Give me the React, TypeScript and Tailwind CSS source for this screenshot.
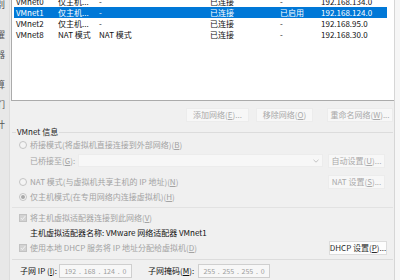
import React from "react";

type Row = {
  name: string;
  type: string;
  host: string;
  status: string;
  dhcp: string;
  subnet: string;
  selected?: boolean;
};

const ROWS: Row[] = [
  { name: "VMnet0", type: "仅主机...", host: "-", status: "已连接", dhcp: "-", subnet: "192.168.134.0" },
  { name: "VMnet1", type: "仅主机...", host: "-", status: "已连接", dhcp: "已启用", subnet: "192.168.124.0", selected: true },
  { name: "VMnet2", type: "仅主机...", host: "-", status: "已连接", dhcp: "-", subnet: "192.168.95.0" },
  { name: "VMnet8", type: "NAT 模式", host: "NAT 模式", status: "已连接", dhcp: "-", subnet: "192.168.30.0" },
];

// clipped glyphs of the window behind, only their right halves show
const BEHIND = ["别", "", "", "曜", "", "器", "", "", "算", "", "们", "", "计"];

function U({ c }: { c: string }) {
  return <span className="underline">{c}</span>;
}

function Btn({
  children,
  className,
  enabled,
}: {
  children: React.ReactNode;
  className: string;
  enabled?: boolean;
}) {
  return (
    <div
      className={`flex h-[14px] items-center justify-center whitespace-nowrap border ${
        enabled
          ? "border-[#dcdcdc] bg-[#fdfdfd] text-[#2a2a2a]"
          : "border-[#ececec] bg-[#f7f7f7] text-[#a9a9a9]"
      } ${className}`}
    >
      {children}
    </div>
  );
}

function Radio({ checked }: { checked?: boolean }) {
  return (
    <div className="flex h-[8px] w-[8px] items-center justify-center rounded-full border border-[#c4c4c4] bg-[#f4f4f4]">
      {checked ? <div className="h-[4px] w-[4px] rounded-full bg-[#a8a8a8]" /> : null}
    </div>
  );
}

function Check() {
  return (
    <div className="flex h-[8px] w-[8px] items-center justify-center border border-[#c2c2c2] bg-[#d3d3d3]">
      <svg width="6" height="6" viewBox="0 0 6 6">
        <path d="M0.8 3 L2.4 4.6 L5.2 1.2" fill="none" stroke="#f3f3f3" strokeWidth="1" />
      </svg>
    </div>
  );
}

function IpBox({ parts, className }: { parts: string[]; className: string }) {
  return (
    <div
      className={`flex h-[14px] items-center justify-around border border-[#cfcfcf] bg-[#f7f7f7] px-[3px] text-[7px] text-[#9c9c9c] ${className}`}
    >
      {parts.map((p, i) => (
        <React.Fragment key={i}>
          {i > 0 ? <span>.</span> : null}
          <span>{p}</span>
        </React.Fragment>
      ))}
    </div>
  );
}

export default function App() {
  return (
    <div className="flex h-[280px] w-[400px] overflow-hidden bg-[#f0f0f0] font-['Noto_Sans_CJK_SC','Liberation_Sans',sans-serif] text-[8px] leading-[10px] text-[#1a1a1a]">
      {/* window behind */}
      <div className="flex w-[10px] flex-col overflow-hidden border-r border-[#dddddd] bg-[#e8e8e8] text-[9px] leading-[10px] text-[#555]">
        {BEHIND.map((c, i) => (
          <div key={i} className="-ml-[4px] h-[10px] shrink-0">
            {c}
          </div>
        ))}
      </div>

      {/* dialog */}
      <div className="flex w-[385px] flex-col border-r border-[#d6d6d6] pl-[1px]">
        {/* network list */}
        <div className="h-[101px] overflow-hidden border-b border-l border-[#ababab] bg-white">
          <div className="-mt-[4px] pl-[2px]">
            {ROWS.map((r) => (
              <div
                key={r.name}
                className={`flex h-[11px] w-[373px] items-center whitespace-nowrap pl-[2px] ${
                  r.selected ? "bg-[#0078d7] text-white" : "text-[#111]"
                }`}
              >
                <div className="w-[42px]">{r.name}</div>
                <div className="w-[41px]">{r.type}</div>
                <div className="w-[111px]">{r.host}</div>
                <div className="w-[70px]">{r.status}</div>
                <div className="w-[41px]">{r.dhcp}</div>
                <div>{r.subnet}</div>
              </div>
            ))}
          </div>
        </div>

        {/* list buttons */}
        <div className="mt-[7px] flex justify-end pr-[1px]">
          <Btn className="w-[63px]">
            添加网络(<U c="E" />)...
          </Btn>
          <Btn className="ml-[7px] w-[57px]">
            移除网络(<U c="O" />)
          </Btn>
          <Btn className="ml-[14px] w-[66px]">
            重命名网络(<U c="W" />)...
          </Btn>
        </div>

        {/* VMnet info */}
        <div className="mt-[5px] flex h-[10px] items-center">
          <div className="ml-[1px] h-px w-[4px] bg-[#dcdcdc]" />
          <span className="px-[1px] text-[#222]">VMnet 信息</span>
          <div className="mr-[1px] h-px flex-1 bg-[#dcdcdc]" />
        </div>

        <div className="mt-[3px] flex h-[10px] items-center pl-[8px] text-[#a3a3a3]">
          <Radio />
          <span className="ml-[3px]">
            桥接模式(将虚拟机直接连接到外部网络)(<U c="B" />)
          </span>
        </div>

        <div className="mt-[4px] flex h-[13px] items-center pl-[19px] text-[#a3a3a3]">
          <span className="w-[48px] whitespace-nowrap">
            已桥接至(<U c="G" />):
          </span>
          <div className="flex h-[13px] w-[245px] items-center justify-end border border-[#ececec] bg-[#f7f7f7] pr-[3px]">
            <svg width="6" height="4" viewBox="0 0 6 4">
              <path d="M0.5 0.8 L3 3.2 L5.5 0.8" fill="none" stroke="#b5b5b5" strokeWidth="0.8" />
            </svg>
          </div>
          <Btn className="ml-[5px] w-[57px]">
            自动设置(<U c="U" />)...
          </Btn>
        </div>

        <div className="mt-[8px] flex h-[13px] items-center pl-[8px] pr-[9px] text-[#a3a3a3]">
          <Radio />
          <span className="ml-[3px] flex-1">
            NAT 模式(与虚拟机共享主机的 IP 地址)(<U c="N" />)
          </span>
          <Btn className="w-[57px]">
            NAT 设置(<U c="S" />)...
          </Btn>
        </div>

        <div className="mt-[4px] flex h-[10px] items-center pl-[8px] text-[#a3a3a3]">
          <Radio checked />
          <span className="ml-[3px]">
            仅主机模式(在专用网络内连接虚拟机)(<U c="H" />)
          </span>
        </div>

        <div className="mx-[1px] mt-[5px] h-px bg-[#e2e2e2]" />

        <div className="mt-[5px] flex h-[10px] items-center pl-[8px] text-[#a3a3a3]">
          <Check />
          <span className="ml-[3px]">
            将主机虚拟适配器连接到此网络(<U c="V" />)
          </span>
        </div>

        <div className="mt-[5px] flex h-[10px] items-center pl-[19px] text-[#111]">
          主机虚拟适配器名称: VMware 网络适配器 VMnet1
        </div>

        <div className="mt-[3px] flex h-[14px] items-center pl-[8px] pr-[7px]">
          <Check />
          <span className="ml-[3px] flex-1 text-[#a3a3a3]">
            使用本地 DHCP 服务将 IP 地址分配给虚拟机(<U c="D" />)
          </span>
          <Btn enabled className="w-[58px]">
            DHCP 设置(<U c="P" />)...
          </Btn>
        </div>

        <div className="mx-[1px] mt-[4px] h-px bg-[#dcdcdc]" />

        <div className="mt-[4px] flex h-[14px] items-center pl-[9px] text-[#111]">
          <span className="w-[39px] whitespace-nowrap">
            子网 IP (<U c="I" />):
          </span>
          <IpBox className="w-[73px]" parts={["192", "168", "124", "0"]} />
          <span className="ml-[16px] w-[50px] whitespace-nowrap">
            子网掩码(<U c="M" />):
          </span>
          <IpBox className="w-[72px]" parts={["255", "255", "255", "0"]} />
        </div>
      </div>

      <div className="w-[5px] bg-[#f6f6f6]" />
    </div>
  );
}
